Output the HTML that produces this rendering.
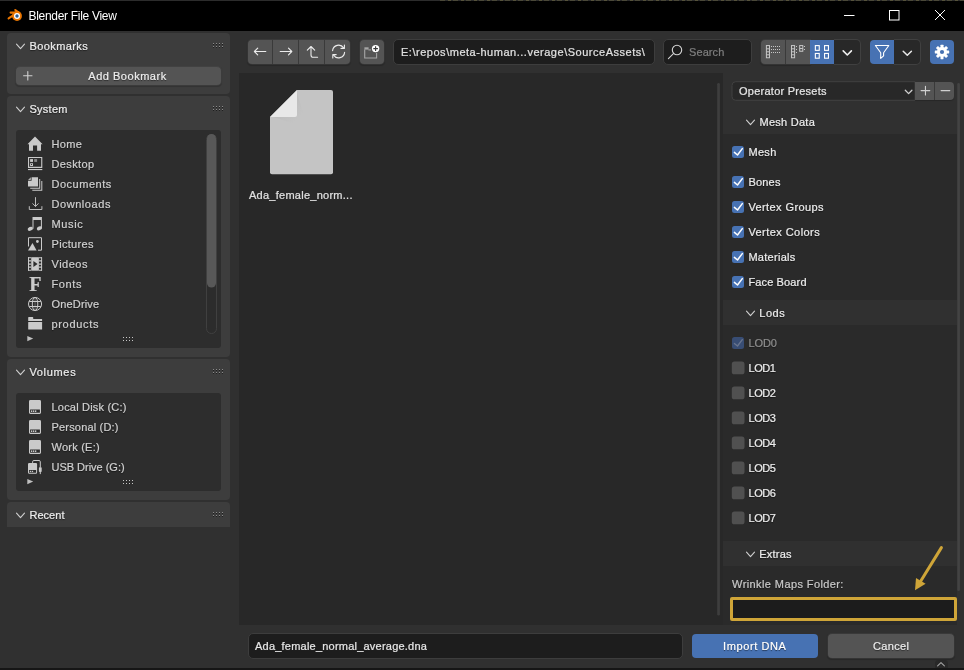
<!DOCTYPE html>
<html lang="en"><head><meta charset="utf-8"><title>Blender File View</title>
<style>
html,body{margin:0;padding:0;background:#303030;}
body{width:964px;height:670px;overflow:hidden;font-family:"Liberation Sans",sans-serif;}
#root{will-change:transform;position:relative;width:964px;height:670px;overflow:hidden;background:#303030;}
#root div,#root svg,#root span{position:absolute;box-sizing:border-box;}
.t{white-space:pre;line-height:16px;height:16px;-webkit-text-stroke:0.22px currentColor;}
.panel{background:#3d3d3d;border-radius:4px;}
.box{background:#2d2d2d;border-radius:3px;}
.btn{background:#545454;box-shadow:0 0 0 1px rgba(84,84,84,.3),0 1px 1px 0.5px rgba(0,0,0,.18);}
.fld{background:#1d1d1d;border:1px solid #3d3d3d;border-radius:4px;}
.blue{background:#4772b3;}
.chk{width:13px;height:13px;border-radius:3px;}
.band{background:#303030;left:723px;width:234px;height:25px;}
svg{overflow:visible;}

</style></head>
<body>
<div id="root">
<!-- title bar -->
<div style="left:0;top:0;width:964px;height:31px;background:#000"></div>
<div style="left:0;top:0;width:964px;height:1px;background:#2c2c2c"></div>
<div style="left:440px;top:0;width:524px;height:1px;background:repeating-linear-gradient(90deg,#4a4838 0 5px,#2c2c2c 5px 8px,#55523a 8px 11px,#2c2c2c 11px 13px)"></div>
<!-- left panels -->
<div class="panel" style="left:7px;top:33px;width:223px;height:61px"></div>
<div class="btn" style="left:16px;top:67px;width:205px;height:18px;border-radius:4px"></div>
<div class="panel" style="left:7px;top:96px;width:223px;height:261px"></div>
<div class="box" style="left:16px;top:130px;width:205px;height:218px"></div>
<div class="panel" style="left:7px;top:359px;width:223px;height:141px"></div>
<div class="box" style="left:16px;top:393px;width:205px;height:98px"></div>
<div class="panel" style="left:7px;top:502px;width:223px;height:25px;border-radius:4px 4px 0 0"></div>
<!-- file area -->
<div style="left:239px;top:73px;width:484px;height:552px;background:#282828"></div>
<!-- right region -->
<div style="left:723px;top:73px;width:241px;height:552px;background:#303030"></div>
<div style="left:723px;top:134px;width:234px;height:491px;background:#2a2a2a"></div>
<div class="band" style="top:300px"></div>
<div class="band" style="top:541px"></div>
<!-- bottom strip -->
<div style="left:0;top:668px;width:964px;height:2px;background:#161616"></div>
<!-- title bar icons -->
<svg style="left:6px;top:7px" width="18" height="18" viewBox="0 0 18 18">
 <g stroke="#ea7600" stroke-width="2.1" stroke-linecap="round" fill="none">
  <path d="M2.6 11.4 L9 7.2"/><path d="M4.6 5.6 L11 5.6"/><path d="M9.3 3 L13.4 6.2"/>
 </g>
 <circle cx="11" cy="9" r="4.9" fill="#ea7600"/>
 <circle cx="11" cy="9" r="3" fill="#ffffff"/>
 <circle cx="11" cy="9" r="1.7" fill="#2a5c92"/>
</svg>
<svg style="left:830px;top:0" width="134" height="32" viewBox="0 0 134 32" fill="none" stroke="#ffffff" stroke-width="1">
 <path d="M14 15.5 H24.5"/>
 <rect x="59.5" y="10.5" width="9.5" height="9.5"/>
 <path d="M105 10 L115 20 M115 10 L105 20"/>
</svg>
<!-- header nav buttons -->
<div class="btn" style="left:248px;top:40px;width:102px;height:24px;border-radius:4px"></div>
<div style="left:272px;top:40px;width:1px;height:24px;background:#3a3a3a"></div>
<div style="left:298px;top:40px;width:1px;height:24px;background:#3a3a3a"></div>
<div style="left:324px;top:40px;width:1px;height:24px;background:#3a3a3a"></div>
<div class="btn" style="left:360px;top:40px;width:24px;height:24px;border-radius:4px"></div>
<svg style="left:240px;top:32px" width="160" height="40" viewBox="240 32 160 40" fill="none" stroke="#ececec" stroke-width="1.1" stroke-linecap="round" stroke-linejoin="round">
 <path d="M265.8 51.5 H254.5 M257.7 48.2 L254.4 51.5 L257.7 54.8"/>
 <path d="M280.2 51.5 H291.7 M288.5 48.2 L291.8 51.5 L288.5 54.8"/>
 <path d="M317.6 57.3 H313.4 Q311 57.3 311 54.9 V46.6 M307.3 50.2 L311 46.5 L314.7 50.2"/>
 <path d="M332.6 50.6 A6 6 0 0 1 343.6 47.9 M344.6 52.4 A6 6 0 0 1 333.6 55.1"/>
 <path d="M344.4 45 V48.4 H341"/>
 <path d="M332.8 58 V54.6 H336.2"/>
</svg>
<svg style="left:360px;top:40px" width="24" height="24" viewBox="360 40 24 24">
 <path d="M364.4 47.3 H368.6 V49.6 H364.4 Z" fill="#a6a6a6"/>
 <path d="M364.7 49.6 V58 H376.6 V53" fill="none" stroke="#a6a6a6" stroke-width="1.1"/>
 <path d="M368.4 49.9 H371" fill="none" stroke="#a6a6a6" stroke-width="1.1"/>
 <circle cx="375.6" cy="48.6" r="3.7" fill="#ffffff"/>
 <path d="M373.3 48.6 H377.9 M375.6 46.3 V50.9" stroke="#3a3a3a" stroke-width="1.1"/>
</svg>
<!-- path & search -->
<div class="fld" style="left:393px;top:39px;width:262px;height:26px;border-radius:5px"></div>
<div class="fld" style="left:663px;top:39px;width:89px;height:26px;border-radius:5px"></div>
<svg style="left:663px;top:40px" width="24" height="24" viewBox="663 40 24 24" fill="none" stroke="#d4d4d4" stroke-width="1.1" stroke-linecap="round">
 <circle cx="677" cy="50" r="4.7"/><path d="M673.4 53.6 L668.4 58.6"/>
</svg>
<!-- display mode -->
<div class="btn" style="left:761px;top:40px;width:49px;height:24px;border-radius:4px 0 0 4px"></div>
<div style="left:785px;top:40px;width:1px;height:24px;background:#3a3a3a"></div>
<div class="blue" style="left:810px;top:40px;width:24px;height:24px"></div>
<div style="left:834px;top:39px;width:27px;height:26px;background:#282828;border:1px solid #404040;border-left:0;border-radius:0 5px 5px 0"></div>
<svg style="left:756px;top:36px" width="108" height="32" viewBox="756 36 108 32" fill="none">
 <g stroke="#c6c6c6" stroke-width="1">
  <rect x="766.4" y="45.55" width="3.1" height="12.2"/><path d="M766.4 48.8 H769.5 M766.4 51.8 H769.5 M766.4 54.8 H769.5"/>
  <rect x="791.5" y="45.55" width="3.1" height="12.2"/><path d="M791.5 48.8 H794.6 M791.5 51.8 H794.6 M791.5 54.8 H794.6"/>
  <rect x="799.7" y="45.55" width="3.1" height="5.7"/><path d="M799.7 48.5 H802.8"/>
 </g>
 <g fill="#c6c6c6">
  <rect x="771" y="46" width="1" height="1"/><rect x="773" y="46" width="1" height="1"/><rect x="775" y="46" width="1" height="1"/><rect x="777" y="46" width="1" height="1"/><rect x="779" y="46" width="1" height="1"/>
  <rect x="771" y="49" width="1" height="1"/><rect x="773" y="49" width="1" height="1"/><rect x="775" y="49" width="1" height="1"/><rect x="777" y="49" width="1" height="1"/><rect x="779" y="49" width="1" height="1"/>
  <rect x="771" y="52" width="1" height="1"/><rect x="773" y="52" width="1" height="1"/><rect x="775" y="52" width="1" height="1"/><rect x="777" y="52" width="1" height="1"/><rect x="779" y="52" width="1" height="1"/>
  <rect x="796" y="46" width="1" height="1"/><rect x="796" y="49" width="1" height="1"/><rect x="796" y="52" width="1" height="1"/>
  <rect x="804" y="46" width="1" height="1"/><rect x="804" y="49" width="1" height="1"/>
 </g>
 <g stroke="#ffffff" stroke-width="1.1">
  <rect x="815.35" y="45.6" width="3.9" height="4.75"/><rect x="824.55" y="45.6" width="3.9" height="4.75"/>
  <rect x="815.35" y="53.45" width="3.9" height="4.75"/><rect x="824.55" y="53.45" width="3.9" height="4.75"/>
 </g>
 <path d="M843.2 50.9 L847.3 55 L851.4 50.9" stroke="#f0f0f0" stroke-width="1.6" stroke-linecap="round" stroke-linejoin="round"/>
</svg>
<!-- filter -->
<div class="blue" style="left:870px;top:40px;width:24px;height:24px;border-radius:4px 0 0 4px"></div>
<div style="left:894px;top:39px;width:27px;height:26px;background:#282828;border:1px solid #404040;border-left:0;border-radius:0 5px 5px 0"></div>
<div class="blue" style="left:930px;top:40px;width:24px;height:24px;border-radius:4px"></div>
<svg style="left:864px;top:36px" width="100" height="32" viewBox="864 36 100 32" fill="none">
 <path d="M875.4 45.5 H888.8 L883.6 52.8 V55.8 L880.7 58.4 V52.8 Z" stroke="#ffffff" stroke-width="1.1" stroke-linejoin="round"/>
 <path d="M903.2 51.2 L907.3 55.3 L911.4 51.2" stroke="#e8e8e8" stroke-width="1.5" stroke-linecap="round" stroke-linejoin="round"/>
 <g transform="translate(942 52)" fill="#ffffff">
  <g><rect x="-1.5" y="-7.2" width="3" height="14.4" rx=".4"/><rect x="-7.2" y="-1.5" width="14.4" height="3" rx=".4"/></g>
  <g transform="rotate(45)"><rect x="-1.5" y="-7.2" width="3" height="14.4" rx=".4"/><rect x="-7.2" y="-1.5" width="14.4" height="3" rx=".4"/></g>
  <circle r="5.1"/>
  <circle r="2.1" fill="#4772b3"/>
 </g>
</svg>
<!-- left panel: chevrons, grips -->
<svg style="left:0;top:32px" width="240" height="500" viewBox="0 32 240 500" fill="none">
 <g stroke="#d0d0d0" stroke-width="1.1" stroke-linecap="round" stroke-linejoin="round">
  <path d="M16.5 44.2 L20.5 48.6 L24.5 44.2"/>
  <path d="M16.5 107.2 L20.5 111.6 L24.5 107.2"/>
  <path d="M16.5 370.2 L20.5 374.6 L24.5 370.2"/>
  <path d="M16.5 513.2 L20.5 517.6 L24.5 513.2"/>
  <path d="M23.6 75.8 H32 M27.8 71.6 V80"/>
 </g>
 <g fill="#8a8a8a"><rect x="213" y="43" width="1" height="1"/><rect x="216" y="43" width="1" height="1"/><rect x="219" y="43" width="1" height="1"/><rect x="222" y="43" width="1" height="1"/><rect x="213" y="46" width="1" height="1"/><rect x="216" y="46" width="1" height="1"/><rect x="219" y="46" width="1" height="1"/><rect x="222" y="46" width="1" height="1"/></g>
 <g fill="#1e1e1e"><rect x="213" y="44" width="1" height="1"/><rect x="216" y="44" width="1" height="1"/><rect x="219" y="44" width="1" height="1"/><rect x="222" y="44" width="1" height="1"/><rect x="213" y="47" width="1" height="1"/><rect x="216" y="47" width="1" height="1"/><rect x="219" y="47" width="1" height="1"/><rect x="222" y="47" width="1" height="1"/></g>
 <g fill="#8a8a8a"><rect x="213" y="106" width="1" height="1"/><rect x="216" y="106" width="1" height="1"/><rect x="219" y="106" width="1" height="1"/><rect x="222" y="106" width="1" height="1"/><rect x="213" y="109" width="1" height="1"/><rect x="216" y="109" width="1" height="1"/><rect x="219" y="109" width="1" height="1"/><rect x="222" y="109" width="1" height="1"/></g>
 <g fill="#1e1e1e"><rect x="213" y="107" width="1" height="1"/><rect x="216" y="107" width="1" height="1"/><rect x="219" y="107" width="1" height="1"/><rect x="222" y="107" width="1" height="1"/><rect x="213" y="110" width="1" height="1"/><rect x="216" y="110" width="1" height="1"/><rect x="219" y="110" width="1" height="1"/><rect x="222" y="110" width="1" height="1"/></g>
 <g fill="#8a8a8a"><rect x="213" y="369" width="1" height="1"/><rect x="216" y="369" width="1" height="1"/><rect x="219" y="369" width="1" height="1"/><rect x="222" y="369" width="1" height="1"/><rect x="213" y="372" width="1" height="1"/><rect x="216" y="372" width="1" height="1"/><rect x="219" y="372" width="1" height="1"/><rect x="222" y="372" width="1" height="1"/></g>
 <g fill="#1e1e1e"><rect x="213" y="370" width="1" height="1"/><rect x="216" y="370" width="1" height="1"/><rect x="219" y="370" width="1" height="1"/><rect x="222" y="370" width="1" height="1"/><rect x="213" y="373" width="1" height="1"/><rect x="216" y="373" width="1" height="1"/><rect x="219" y="373" width="1" height="1"/><rect x="222" y="373" width="1" height="1"/></g>
 <g fill="#8a8a8a"><rect x="213" y="512" width="1" height="1"/><rect x="216" y="512" width="1" height="1"/><rect x="219" y="512" width="1" height="1"/><rect x="222" y="512" width="1" height="1"/><rect x="213" y="515" width="1" height="1"/><rect x="216" y="515" width="1" height="1"/><rect x="219" y="515" width="1" height="1"/><rect x="222" y="515" width="1" height="1"/></g>
 <g fill="#1e1e1e"><rect x="213" y="513" width="1" height="1"/><rect x="216" y="513" width="1" height="1"/><rect x="219" y="513" width="1" height="1"/><rect x="222" y="513" width="1" height="1"/><rect x="213" y="516" width="1" height="1"/><rect x="216" y="516" width="1" height="1"/><rect x="219" y="516" width="1" height="1"/><rect x="222" y="516" width="1" height="1"/></g>
 <!-- list footers -->
 <path d="M27.3 336 L33.2 338.6 L27.3 341.2 Z" fill="#c0c0c0"/>
 <path d="M27.3 479 L33.2 481.6 L27.3 484.2 Z" fill="#c0c0c0"/>
 <g fill="#c8c8c8">
  <rect x="123" y="337" width="1" height="1"/><rect x="126" y="337" width="1" height="1"/><rect x="129" y="337" width="1" height="1"/><rect x="132" y="337" width="1" height="1"/>
  <rect x="123" y="340" width="1" height="1"/><rect x="126" y="340" width="1" height="1"/><rect x="129" y="340" width="1" height="1"/><rect x="132" y="340" width="1" height="1"/>
  <rect x="123" y="480" width="1" height="1"/><rect x="126" y="480" width="1" height="1"/><rect x="129" y="480" width="1" height="1"/><rect x="132" y="480" width="1" height="1"/>
  <rect x="123" y="483" width="1" height="1"/><rect x="126" y="483" width="1" height="1"/><rect x="129" y="483" width="1" height="1"/><rect x="132" y="483" width="1" height="1"/>
 </g>
 <!-- scrollbar -->
 <rect x="206.5" y="134.5" width="10" height="199" rx="5" stroke="#404040" stroke-width="1" fill="#2c2c2c"/>
 <rect x="207" y="134" width="9" height="153.5" rx="4.5" fill="#585858"/>
</svg>
<!-- list icons -->
<svg style="left:24px;top:130px" width="24" height="350" viewBox="24 130 24 350">
 <g fill="#cacaca">
  <!-- home -->
  <path d="M35 136.6 L42.6 144.2 H41 V150.8 H37.1 V145.6 H33 V150.8 H29 V144.2 H27.5 Z"/>
  <!-- desktop -->
  <path d="M28 157 H42.3 V167.9 H28 Z M29.1 158.1 V166.8 H41.2 V158.1 Z" fill-rule="evenodd"/>
  <rect x="28" y="169" width="14.3" height="1.1"/>
  <rect x="30.1" y="159.1" width="2.9" height="2.8"/>
  <rect x="34.2" y="159.1" width="2.9" height="2.8" fill="#8a8a8a"/>
  <path d="M30.1 163.2 H33 V166 H30.1 Z M31 164.1 V165.1 H32.1 V164.1 Z" fill-rule="evenodd"/>
  <!-- documents -->
  <path d="M31.6 177.2 H38 V186.6 H28 V180.8 H31.6 Z"/>
  <path d="M28.1 180 L30.8 177.3 V180 Z" fill="#b4b4b4"/>
  <path d="M39.2 179 H40.2 V188.7 H30.2 V187.7 H39.2 Z"/>
  <path d="M41.3 181.1 H42.3 V190.8 H32.3 V189.8 H41.3 Z"/>
  <!-- music -->
  <path d="M32.5 217.1 H41.9 V228.3 H40.9 V220 H33.5 V228.7 H32.5 Z"/>
  <ellipse cx="30.3" cy="228.8" rx="2.7" ry="1.9" transform="rotate(-20 30.3 228.8)"/>
  <ellipse cx="39.4" cy="228.3" rx="2.7" ry="1.9" transform="rotate(-20 39.4 228.3)"/>
  <!-- pictures -->
  <path d="M28 250.6 L32.5 243 L36.6 250.6 Z"/>
  <circle cx="37.4" cy="241.5" r="1.4"/>
  <!-- videos -->
  <rect x="31.2" y="257.2" width="7.7" height="13.5"/>
  <path d="M28 257.2 H29 V270.7 H28 Z M41.1 257.2 H42.1 V270.7 H41.1 Z"/>
  <path d="M28 257.2 H31 V258.2 H28 Z M28 260.3 H31 V261.6 H28 Z M28 263.4 H31 V264.7 H28 Z M28 266.5 H31 V267.8 H28 Z M28 269.7 H31 V270.7 H28 Z"/>
  <path d="M39 257.2 H42 V258.2 H39 Z M39 260.3 H42 V261.6 H39 Z M39 263.4 H42 V264.7 H39 Z M39 266.5 H42 V267.8 H39 Z M39 269.7 H42 V270.7 H39 Z"/>
  <path d="M33.4 261 L37.6 264 L33.4 267 Z" fill="#2d2d2d"/>
  <!-- folder -->
  <path d="M28.2 317.6 Q28.2 317 28.8 317 H32.6 Q33.2 317 33.2 317.6 V318.9 H42.1 V321 H28.2 Z"/>
  <rect x="28.2" y="322" width="13.9" height="7.6" rx=".5"/>
  <!-- disks -->
  <path d="M30.4 400 H39.6 Q41 400 41 401.4 V412.6 Q41 414 39.6 414 H30.4 Q29 414 29 412.6 V401.4 Q29 400 30.4 400 Z M30.1 409.4 V412.8 H39.9 V409.4 Z" fill-rule="evenodd"/>
  <rect x="31" y="410.4" width="1.3" height="1.6"/><rect x="33" y="410.4" width="1.3" height="1.6"/><rect x="35" y="410.4" width="1.3" height="1.6"/>
  <path d="M30.4 420 H39.6 Q41 420 41 421.4 V432.6 Q41 434 39.6 434 H30.4 Q29 434 29 432.6 V421.4 Q29 420 30.4 420 Z M30.1 429.4 V432.8 H39.9 V429.4 Z" fill-rule="evenodd"/>
  <rect x="31" y="430.4" width="1.3" height="1.6"/><rect x="33" y="430.4" width="1.3" height="1.6"/><rect x="35" y="430.4" width="1.3" height="1.6"/>
  <path d="M30.4 440 H39.6 Q41 440 41 441.4 V452.6 Q41 454 39.6 454 H30.4 Q29 454 29 452.6 V441.4 Q29 440 30.4 440 Z M30.1 449.4 V452.8 H39.9 V449.4 Z" fill-rule="evenodd"/>
  <rect x="31" y="450.4" width="1.3" height="1.6"/><rect x="33" y="450.4" width="1.3" height="1.6"/><rect x="35" y="450.4" width="1.3" height="1.6"/>

  <!-- usb -->
  <path d="M29.2 462.9 H35.9 Q37.1 462.9 37.1 464.1 V472.5 Q37.1 473.7 35.9 473.7 H29.2 Q28 473.7 28 472.5 V464.1 Q28 462.9 29.2 462.9 Z M29 470 V472.8 H36.1 V470 Z" fill-rule="evenodd"/>
  <rect x="29.8" y="470.8" width="1.3" height="1.3"/><rect x="31.8" y="470.8" width="1.3" height="1.3"/>
  <rect x="38.9" y="467.3" width="2.8" height="4.7" rx=".7"/><rect x="39.8" y="471.8" width="1" height="2.3"/>
 </g>
 <g fill="none" stroke="#bdbdbd" stroke-width="1">
  <!-- downloads -->
  <path d="M35.5 197.2 V206.4 M32.5 203.4 L35.5 206.5 L38.5 203.4"/>
  <path d="M29.3 206.2 V209.5 H41.9 V206.2"/>
  <!-- pictures frame -->
  <path d="M28.5 246.5 V237.7 H41.5 V250.2 H38" stroke="#cacaca"/>
  <!-- globe -->
  <g stroke="#cacaca" stroke-width="1">
  <circle cx="35.05" cy="304" r="6.55"/>
  <ellipse cx="35.05" cy="304" rx="2.75" ry="6.55"/>
  <path d="M29.2 301.5 H40.9 M29.2 306.5 H40.9"/>
  <path d="M35.05 297.5 V310.5" stroke-opacity=".35"/>
  </g>
  <!-- usb cable -->
  <path d="M32.6 462.9 V461.8 Q32.6 460.5 33.9 460.5 H39 Q40.3 460.5 40.3 461.8 V467.6" stroke="#cacaca"/>
 </g>
</svg>
<span class="t" style="left:29.3px;top:272.4px;font-family:'Liberation Serif',serif;font-weight:bold;font-size:20px;line-height:24px;height:24px;color:#cacaca">F</span>
<!-- right panel widgets -->
<svg style="left:725px;top:76px" width="200" height="30" viewBox="725 76 200 30"><path d="M915 81.7 H735.7 Q732 81.7 732 85.4 V96.6 Q732 100.3 735.7 100.3 H915 Z" fill="#282828" stroke="#414141" stroke-width="1"/></svg>
<div class="btn" style="left:915px;top:82px;width:39px;height:18px;border-radius:0 4px 4px 0;box-shadow:0 1px 1px rgba(0,0,0,.2)"></div>
<div style="left:934px;top:82px;width:1px;height:18px;background:#3a3a3a"></div>
<div class="blue chk" style="left:732px;top:146px;width:12px;height:12px;border-radius:2.5px"></div>
<div class="blue chk" style="left:732px;top:176px;width:12px;height:12px;border-radius:2.5px"></div>
<div class="blue chk" style="left:732px;top:201px;width:12px;height:12px;border-radius:2.5px"></div>
<div class="blue chk" style="left:732px;top:226px;width:12px;height:12px;border-radius:2.5px"></div>
<div class="blue chk" style="left:732px;top:251px;width:12px;height:12px;border-radius:2.5px"></div>
<div class="blue chk" style="left:732px;top:276px;width:12px;height:12px;border-radius:2.5px"></div>
<div class="chk" style="left:732px;top:337px;width:12px;height:12px;border-radius:2.5px;background:#384d74"></div>
<svg style="left:723px;top:73px" width="241" height="597" viewBox="723 73 241 597" fill="none">
<rect x="731.8" y="361.5" width="12.7" height="12.8" rx="2.6" fill="#505050"/><rect x="731.8" y="386.5" width="12.7" height="12.8" rx="2.6" fill="#505050"/><rect x="731.8" y="411.5" width="12.7" height="12.8" rx="2.6" fill="#505050"/><rect x="731.8" y="436.5" width="12.7" height="12.8" rx="2.6" fill="#505050"/><rect x="731.8" y="461.5" width="12.7" height="12.8" rx="2.6" fill="#505050"/><rect x="731.8" y="486.5" width="12.7" height="12.8" rx="2.6" fill="#505050"/><rect x="731.8" y="511.5" width="12.7" height="12.8" rx="2.6" fill="#505050"/>
<g stroke="#ffffff" stroke-width="1.5" stroke-linecap="round" stroke-linejoin="round">
<path d="M734.4 152.4 L737.5 155 L742.3 148.6"/>
<path d="M734.4 182.4 L737.5 185 L742.3 178.6"/>
<path d="M734.4 207.4 L737.5 210 L742.3 203.6"/>
<path d="M734.4 232.4 L737.5 235 L742.3 228.6"/>
<path d="M734.4 257.4 L737.5 260 L742.3 253.6"/>
<path d="M734.4 282.4 L737.5 285 L742.3 278.6"/>
</g>
<path d="M734.4 343.4 L737.5 346 L742.3 339.6" stroke="#69758e" stroke-width="1.3" stroke-linecap="round" stroke-linejoin="round"/>
<g stroke="#d0d0d0" stroke-width="1.1" stroke-linecap="round" stroke-linejoin="round">
<path d="M746.5 120.2 L750.5 124.6 L754.5 120.2"/>
<path d="M746.5 311.2 L750.5 315.6 L754.5 311.2"/>
<path d="M746.5 552.2 L750.5 556.6 L754.5 552.2"/>
<path d="M905.3 90.2 L908.6 93.6 L911.9 90.2" stroke-width="1.3"/>
<path d="M921.1 90.6 H929.8 M925.45 86.2 V95"/>
<path d="M941.1 90.6 H949.8"/>
</g>
<rect x="957.3" y="83" width="2.6" height="508" rx="1.3" fill="#434343"/>
<rect x="717.2" y="83" width="2.7" height="532.5" rx="1.35" fill="#3e3e3e"/>
<path d="M941.4 547.6 L920.8 581" stroke="#cfa538" stroke-width="3" stroke-linecap="round"/>
<path d="M915 590.2 L916 578 L925.6 583.8 Z" fill="#cfa538"/>
<path d="M935 668 V663.5 Q935 660 938.5 660 H944.5 Q948 660 948 663.5 V668 Z" fill="#282828"/>
<path d="M937.6 665.9 L941 662.7 L944.4 665.9" stroke="#a4a4a4" stroke-width="1.1" stroke-linecap="round" stroke-linejoin="round"/>
</svg>
<div style="left:730px;top:597px;width:226.6px;height:23.5px;background:#1c1c1c;border:3.6px solid #cfa538;border-radius:2px"></div>
<div class="fld" style="left:248px;top:633px;width:435px;height:26px;border-radius:5px"></div>
<div class="blue" style="left:692px;top:634px;width:126px;height:24px;border-radius:4px"></div>
<div class="btn" style="left:828px;top:634px;width:126px;height:24px;border-radius:4px"></div>
<svg style="left:262px;top:84px" width="80" height="96" viewBox="262 84 80 96">
<defs><linearGradient id="fs" x1="0" y1="0" x2="1" y2="1"><stop offset="0" stop-color="#9c9c9c"/><stop offset="1" stop-color="#c4c4c4" stop-opacity="0"/></linearGradient></defs>
<path d="M297 90 H331 Q333 90 333 92 V172.2 Q333 174.2 331 174.2 H272 Q270 174.2 270 172.2 V117 Z" fill="#c4c4c4"/>
<path d="M273 117 L297 93 L303 112 L292 123 Z" fill="url(#fs)" opacity=".55"/>
<path d="M297 90 V115 Q297 117 295 117 H270 Z" fill="#e8e8e8"/>
</svg>

<span class="t" style="left:28.5px;top:7.5px;color:#ffffff;font-size:12px;letter-spacing:-0.3px;-webkit-text-stroke:0;">Blender File View</span>
<span class="t" style="left:29.4px;top:38px;color:#ececec;font-size:11px;letter-spacing:0.42px;text-shadow:0 1px 1px rgba(0,0,0,.55);">Bookmarks</span>
<span class="t" style="left:88.3px;top:68px;color:#ececec;font-size:11px;letter-spacing:0.52px;text-shadow:0 1px 1px rgba(0,0,0,.55);">Add Bookmark</span>
<span class="t" style="left:29.4px;top:101px;color:#ececec;font-size:11px;letter-spacing:0.28px;text-shadow:0 1px 1px rgba(0,0,0,.55);">System</span>
<span class="t" style="left:29.4px;top:364px;color:#ececec;font-size:11px;letter-spacing:0.68px;text-shadow:0 1px 1px rgba(0,0,0,.55);">Volumes</span>
<span class="t" style="left:29.4px;top:507px;color:#ececec;font-size:11px;letter-spacing:0.05px;text-shadow:0 1px 1px rgba(0,0,0,.55);">Recent</span>
<span class="t" style="left:51.5px;top:136px;color:#cfcfcf;font-size:11px;letter-spacing:0.35px;text-shadow:0 1px 1px rgba(0,0,0,.55);">Home</span>
<span class="t" style="left:51.5px;top:156px;color:#cfcfcf;font-size:11px;letter-spacing:0.39px;text-shadow:0 1px 1px rgba(0,0,0,.55);">Desktop</span>
<span class="t" style="left:51.5px;top:176px;color:#cfcfcf;font-size:11px;letter-spacing:0.52px;text-shadow:0 1px 1px rgba(0,0,0,.55);">Documents</span>
<span class="t" style="left:51.5px;top:196px;color:#cfcfcf;font-size:11px;letter-spacing:0.56px;text-shadow:0 1px 1px rgba(0,0,0,.55);">Downloads</span>
<span class="t" style="left:51.5px;top:216px;color:#cfcfcf;font-size:11px;letter-spacing:0.62px;text-shadow:0 1px 1px rgba(0,0,0,.55);">Music</span>
<span class="t" style="left:51.5px;top:236px;color:#cfcfcf;font-size:11px;letter-spacing:0.31px;text-shadow:0 1px 1px rgba(0,0,0,.55);">Pictures</span>
<span class="t" style="left:51.5px;top:256px;color:#cfcfcf;font-size:11px;letter-spacing:0.51px;text-shadow:0 1px 1px rgba(0,0,0,.55);">Videos</span>
<span class="t" style="left:51.5px;top:276px;color:#cfcfcf;font-size:11px;letter-spacing:0.62px;text-shadow:0 1px 1px rgba(0,0,0,.55);">Fonts</span>
<span class="t" style="left:51.5px;top:296px;color:#cfcfcf;font-size:11px;letter-spacing:0.16px;text-shadow:0 1px 1px rgba(0,0,0,.55);">OneDrive</span>
<span class="t" style="left:51.5px;top:316px;color:#cfcfcf;font-size:11px;letter-spacing:0.67px;text-shadow:0 1px 1px rgba(0,0,0,.55);">products</span>
<span class="t" style="left:51.5px;top:399px;color:#cfcfcf;font-size:11px;letter-spacing:0.2px;text-shadow:0 1px 1px rgba(0,0,0,.55);">Local Disk (C:)</span>
<span class="t" style="left:51.5px;top:419px;color:#cfcfcf;font-size:11px;letter-spacing:0.18px;text-shadow:0 1px 1px rgba(0,0,0,.55);">Personal (D:)</span>
<span class="t" style="left:51.5px;top:439px;color:#cfcfcf;font-size:11px;letter-spacing:0.23px;text-shadow:0 1px 1px rgba(0,0,0,.55);">Work (E:)</span>
<span class="t" style="left:51.5px;top:459px;color:#cfcfcf;font-size:11px;letter-spacing:-0.02px;text-shadow:0 1px 1px rgba(0,0,0,.55);">USB Drive (G:)</span>
<span class="t" style="left:401px;top:44px;color:#e0e0e0;font-size:11px;letter-spacing:0.52px;">E:\repos\meta-human...verage\SourceAssets\</span>
<span class="t" style="left:689px;top:44px;color:#7e7e7e;font-size:11px;letter-spacing:0.09px;">Search</span>
<span class="t" style="left:739px;top:82.7px;color:#e6e6e6;font-size:11px;letter-spacing:0.25px;">Operator Presets</span>
<span class="t" style="left:759.5px;top:114px;color:#ececec;font-size:11px;letter-spacing:0.26px;text-shadow:0 1px 1px rgba(0,0,0,.55);">Mesh Data</span>
<span class="t" style="left:748.4px;top:144px;color:#ececec;font-size:11px;letter-spacing:0.33px;text-shadow:0 1px 1px rgba(0,0,0,.55);">Mesh</span>
<span class="t" style="left:748.4px;top:174px;color:#ececec;font-size:11px;letter-spacing:0.2px;text-shadow:0 1px 1px rgba(0,0,0,.55);">Bones</span>
<span class="t" style="left:748.4px;top:199px;color:#ececec;font-size:11px;letter-spacing:0.4px;text-shadow:0 1px 1px rgba(0,0,0,.55);">Vertex Groups</span>
<span class="t" style="left:748.4px;top:224px;color:#ececec;font-size:11px;letter-spacing:0.44px;text-shadow:0 1px 1px rgba(0,0,0,.55);">Vertex Colors</span>
<span class="t" style="left:748.4px;top:249px;color:#ececec;font-size:11px;letter-spacing:0.28px;text-shadow:0 1px 1px rgba(0,0,0,.55);">Materials</span>
<span class="t" style="left:748.4px;top:274px;color:#ececec;font-size:11px;letter-spacing:0.14px;text-shadow:0 1px 1px rgba(0,0,0,.55);">Face Board</span>
<span class="t" style="left:759.3px;top:305px;color:#ececec;font-size:11px;letter-spacing:0.51px;text-shadow:0 1px 1px rgba(0,0,0,.55);">Lods</span>
<span class="t" style="left:748.6px;top:335px;color:#8e8e8e;font-size:11px;letter-spacing:-0.18px;text-shadow:0 1px 1px rgba(0,0,0,.4);">LOD0</span>
<span class="t" style="left:748.6px;top:360px;color:#ececec;font-size:11px;letter-spacing:-0.52px;text-shadow:0 1px 1px rgba(0,0,0,.55);">LOD1</span>
<span class="t" style="left:748.6px;top:385px;color:#ececec;font-size:11px;letter-spacing:-0.52px;text-shadow:0 1px 1px rgba(0,0,0,.55);">LOD2</span>
<span class="t" style="left:748.6px;top:410px;color:#ececec;font-size:11px;letter-spacing:-0.52px;text-shadow:0 1px 1px rgba(0,0,0,.55);">LOD3</span>
<span class="t" style="left:748.6px;top:435px;color:#ececec;font-size:11px;letter-spacing:-0.52px;text-shadow:0 1px 1px rgba(0,0,0,.55);">LOD4</span>
<span class="t" style="left:748.6px;top:460px;color:#ececec;font-size:11px;letter-spacing:-0.52px;text-shadow:0 1px 1px rgba(0,0,0,.55);">LOD5</span>
<span class="t" style="left:748.6px;top:485px;color:#ececec;font-size:11px;letter-spacing:-0.52px;text-shadow:0 1px 1px rgba(0,0,0,.55);">LOD6</span>
<span class="t" style="left:748.6px;top:510px;color:#ececec;font-size:11px;letter-spacing:-0.52px;text-shadow:0 1px 1px rgba(0,0,0,.55);">LOD7</span>
<span class="t" style="left:759.2px;top:546px;color:#ececec;font-size:11px;letter-spacing:0.24px;text-shadow:0 1px 1px rgba(0,0,0,.55);">Extras</span>
<span class="t" style="left:732.1px;top:576px;color:#c8c8c8;font-size:11px;letter-spacing:0.4px;text-shadow:0 1px 1px rgba(0,0,0,.55);">Wrinkle Maps Folder:</span>
<span class="t" style="left:249px;top:187px;color:#e0e0e0;font-size:11px;letter-spacing:0.26px;">Ada_female_norm...</span>
<span class="t" style="left:255px;top:638px;color:#e6e6e6;font-size:11px;letter-spacing:0.22px;">Ada_female_normal_average.dna</span>
<span class="t" style="left:723px;top:638px;color:#ffffff;font-size:11px;letter-spacing:0.61px;text-shadow:0 1px 1px rgba(0,0,0,.55);">Import DNA</span>
<span class="t" style="left:873px;top:638px;color:#ececec;font-size:11px;letter-spacing:0.35px;text-shadow:0 1px 1px rgba(0,0,0,.55);">Cancel</span>
</div>
</body></html>
